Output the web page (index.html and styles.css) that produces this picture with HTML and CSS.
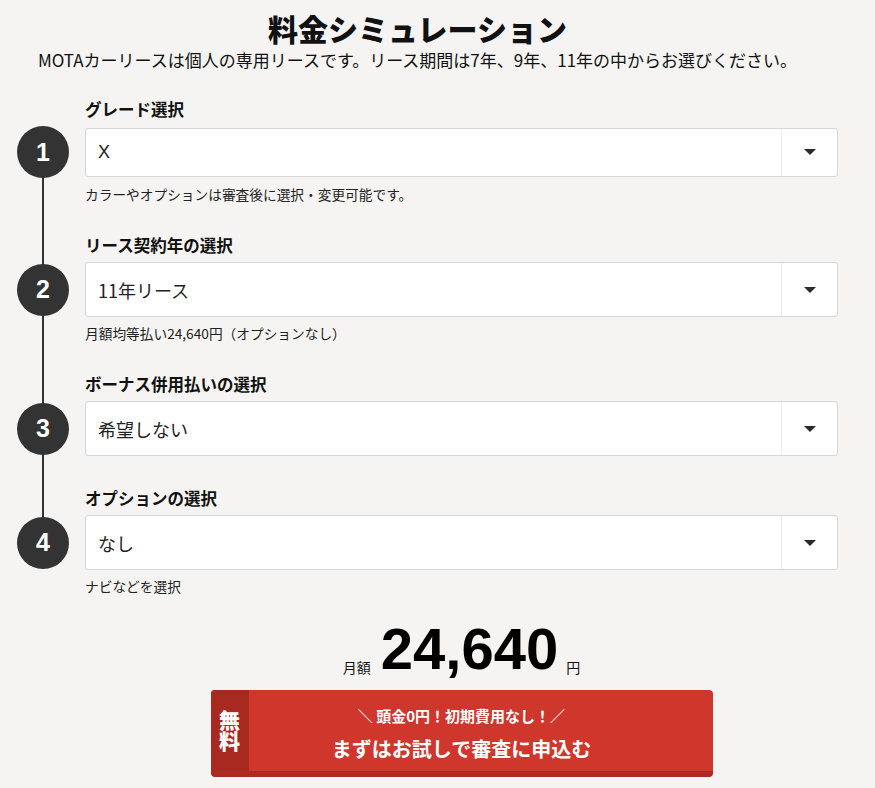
FILE: index.html
```html
<!DOCTYPE html>
<html lang="ja">
<head>
<meta charset="utf-8">
<title>料金シミュレーション</title>
<link rel="stylesheet" href="styles.css">
</head>
<body>
<div class="page">
  <header class="header">
    <h1 class="title">料金シミュレーション</h1>
    <p class="lead">MOTAカーリースは個人の専用リースです。リース期間は7年、9年、11年の中からお選びください。</p>
  </header>

  <div class="steps">
    <div class="step">
      <div class="step-label">グレード選択</div>
      <span class="num">1</span>
      <div class="select select-short">
        <span class="select-value latin">X</span>
        <span class="select-arrow"><i class="tri"></i></span>
      </div>
      <p class="help">カラーやオプションは審査後に選択・変更可能です。</p>
    </div>

    <div class="step">
      <div class="step-label">リース契約年の選択</div>
      <span class="num">2</span>
      <div class="select">
        <span class="select-value">11年リース</span>
        <span class="select-arrow"><i class="tri"></i></span>
      </div>
      <p class="help">月額均等払い24,640円（オプションなし）</p>
    </div>

    <div class="step">
      <div class="step-label">ボーナス併用払いの選択</div>
      <span class="num">3</span>
      <div class="select">
        <span class="select-value">希望しない</span>
        <span class="select-arrow"><i class="tri"></i></span>
      </div>
    </div>

    <div class="step">
      <div class="step-label">オプションの選択</div>
      <span class="num">4</span>
      <div class="select">
        <span class="select-value">なし</span>
        <span class="select-arrow"><i class="tri"></i></span>
      </div>
      <p class="help">ナビなどを選択</p>
    </div>
  </div>

  <div class="result">
    <div class="price">
      <span class="price-unit">月額</span><span class="price-num">24,640</span><span class="price-unit">円</span>
    </div>
    <a class="cta" href="#">
      <span class="cta-badge">無料</span>
      <span class="cta-sub">＼ 頭金0円！初期費用なし！／</span>
      <span class="cta-main">まずはお試しで審査に申込む</span>
    </a>
  </div>
</div>
</body>
</html>
```

FILE: styles.css
```css
* { box-sizing: border-box; }

html, body {
  margin: 0;
  padding: 0;
  background: #f5f4f2;
}

body {
  font-family: "Noto Sans CJK JP", "Noto Sans", sans-serif;
  color: #111;
  width: 875px;
  height: 788px;
  overflow: hidden;
}

.page {
  padding-top: 8px;
}

.header {
  padding-right: 40px;
  text-align: center;
}

.title {
  margin: 0;
  font-size: 30px;
  line-height: 40px;
  font-weight: 900;
  color: #111;
}

.lead {
  margin: 0;
  font-size: 17px;
  line-height: 24px;
  color: #111;
}

.steps {
  position: relative;
  margin-top: 26px;
}

.steps::before {
  content: "";
  position: absolute;
  left: 42px;
  top: 50px;
  height: 390px;
  width: 2px;
  background: #333;
}

.step {
  display: grid;
  grid-template-columns: 85px 753px;
  align-items: center;
  margin-bottom: 31px;
}

.step:last-child { margin-bottom: 0; }

.step-label {
  grid-column: 2;
  font-size: 16.5px;
  line-height: 22px;
  font-weight: 700;
  margin-bottom: 6px;
}

.num {
  grid-column: 1;
  position: relative;
  z-index: 1;
  width: 52px;
  height: 52px;
  margin-left: 17px;
  border-radius: 50%;
  background: #333;
  color: #fff;
  font-family: "Liberation Sans", Arial, sans-serif;
  font-weight: 700;
  font-size: 25px;
  display: flex;
  align-items: center;
  justify-content: center;
}

.select {
  grid-column: 2;
  height: 55px;
  background: #fff;
  border: 1px solid #d6d6d6;
  border-radius: 3px;
  display: flex;
  align-items: stretch;
}

.select-short { height: 49px; }

.select-value {
  flex: 1;
  display: flex;
  align-items: center;
  padding-left: 12px;
  font-size: 18px;
  color: #222;
}

.select-value.latin {
  font-family: "Liberation Sans", Arial, sans-serif;
  font-size: 18px;
}

.select-arrow {
  width: 56px;
  border-left: 1px solid #ececec;
  display: flex;
  align-items: center;
  justify-content: center;
}

.tri {
  width: 0;
  height: 0;
  border-left: 6px solid transparent;
  border-right: 6px solid transparent;
  border-top: 6px solid #2a2a2a;
}

.help {
  grid-column: 2;
  margin: 7px 0 0;
  font-size: 13.7px;
  line-height: 18px;
  color: #222;
}

.result {
  margin-left: 85px;
  width: 753px;
  display: flex;
  flex-direction: column;
  align-items: center;
}

.price {
  margin-top: 25px;
  display: flex;
  align-items: baseline;
  justify-content: center;
}

.price-num {
  font-family: "Liberation Sans", Arial, sans-serif;
  font-weight: 700;
  font-size: 58px;
  line-height: 58px;
  margin: 0 8px 0 10px;
  color: #000;
}

.price-unit {
  font-size: 14px;
  line-height: 20px;
  color: #111;
  position: relative;
  top: 4px;
}

.cta {
  position: relative;
  margin-top: 12px;
  width: 502px;
  background: #cf362c;
  border-bottom: 6px solid #ad2a22;
  border-radius: 4px;
  color: #fff;
  text-decoration: none;
  display: flex;
  flex-direction: column;
  align-items: center;
  padding: 15px 0 8px;
  font-weight: 700;
}

.cta-badge {
  position: absolute;
  left: 0;
  top: 0;
  bottom: 0;
  width: 38px;
  background: #a8291f;
  border-radius: 4px 0 0 0;
  writing-mode: vertical-rl;
  text-orientation: upright;
  font-size: 21px;
  line-height: 38px;
  font-weight: 900;
  display: flex;
  align-items: center;
  justify-content: center;
}

.cta-sub {
  font-size: 15px;
  line-height: 22px;
}

.cta-main {
  margin-top: 8px;
  font-size: 20px;
  line-height: 28px;
}
```
